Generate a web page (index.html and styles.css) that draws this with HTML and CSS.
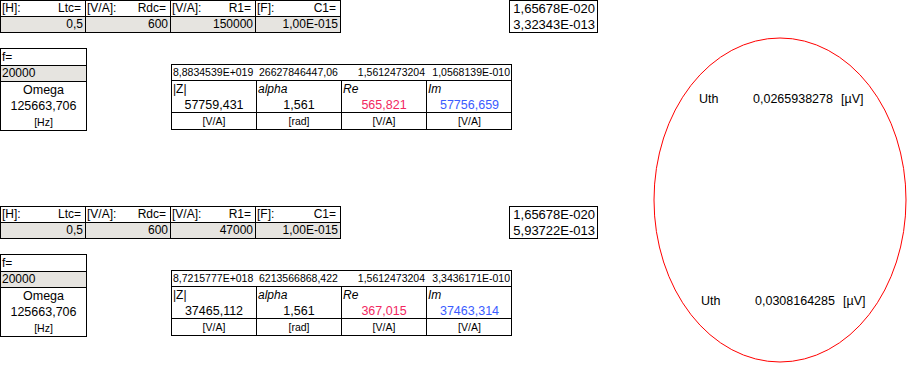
FILE: index.html
```html
<!DOCTYPE html>
<html lang="en">
<head>
    <meta charset="UTF-8">
    <title>Thevenin noise - Ltc / Rdc</title>
    <link rel="stylesheet" href="styles.css">
</head>
<body>
    <div class="page">
        <div class="sheet">
            <!-- Case 1: R1 = 150000 -->
            <div class="block">
                <div class="block-top">
                    <div class="params">
                        <div class="cell label"><span>[H]:</span><span>Ltc=</span></div>
                        <div class="cell label"><span>[V/A]:</span><span>Rdc=</span></div>
                        <div class="cell label"><span>[V/A]:</span><span>R1=</span></div>
                        <div class="cell label"><span>[F]:</span><span>C1=</span></div>
                        <div class="cell value">0,5</div>
                        <div class="cell value">600</div>
                        <div class="cell value">150000</div>
                        <div class="cell value">1,00E-015</div>
                    </div>
                    <div class="consts">
                        <div>1,65678E-020</div>
                        <div>3,32343E-013</div>
                    </div>
                </div>
                <div class="block-body">
                    <div class="freq">
                        <div class="freq-head">f=</div>
                        <div class="freq-input">20000</div>
                        <div class="freq-omega">
                            <div>Omega</div>
                            <div>125663,706</div>
                            <div class="unit">[Hz]</div>
                        </div>
                    </div>
                    <div class="result">
                        <div class="raw">
                            <span>8,8834539E+019</span>
                            <span>26627846447,06</span>
                            <span>1,5612473204</span>
                            <span>1,0568139E-010</span>
                        </div>
                        <div class="grid">
                            <div class="r-col">
                                <div class="r-name">|Z|</div>
                                <div class="r-val">57759,431</div>
                                <div class="r-unit">[V/A]</div>
                            </div>
                            <div class="r-col">
                                <div class="r-name italic">alpha</div>
                                <div class="r-val">1,561</div>
                                <div class="r-unit">[rad]</div>
                            </div>
                            <div class="r-col">
                                <div class="r-name italic">Re</div>
                                <div class="r-val re">565,821</div>
                                <div class="r-unit">[V/A]</div>
                            </div>
                            <div class="r-col">
                                <div class="r-name italic">Im</div>
                                <div class="r-val im">57756,659</div>
                                <div class="r-unit">[V/A]</div>
                            </div>
                        </div>
                    </div>
                </div>
            </div>

            <!-- Case 2: R1 = 47000 -->
            <div class="block second">
                <div class="block-top">
                    <div class="params">
                        <div class="cell label"><span>[H]:</span><span>Ltc=</span></div>
                        <div class="cell label"><span>[V/A]:</span><span>Rdc=</span></div>
                        <div class="cell label"><span>[V/A]:</span><span>R1=</span></div>
                        <div class="cell label"><span>[F]:</span><span>C1=</span></div>
                        <div class="cell value">0,5</div>
                        <div class="cell value">600</div>
                        <div class="cell value">47000</div>
                        <div class="cell value">1,00E-015</div>
                    </div>
                    <div class="consts">
                        <div>1,65678E-020</div>
                        <div>5,93722E-013</div>
                    </div>
                </div>
                <div class="block-body">
                    <div class="freq">
                        <div class="freq-head">f=</div>
                        <div class="freq-input">20000</div>
                        <div class="freq-omega">
                            <div>Omega</div>
                            <div>125663,706</div>
                            <div class="unit">[Hz]</div>
                        </div>
                    </div>
                    <div class="result">
                        <div class="raw">
                            <span>8,7215777E+018</span>
                            <span>6213566868,422</span>
                            <span>1,5612473204</span>
                            <span>3,3436171E-010</span>
                        </div>
                        <div class="grid">
                            <div class="r-col">
                                <div class="r-name">|Z|</div>
                                <div class="r-val">37465,112</div>
                                <div class="r-unit">[V/A]</div>
                            </div>
                            <div class="r-col">
                                <div class="r-name italic">alpha</div>
                                <div class="r-val">1,561</div>
                                <div class="r-unit">[rad]</div>
                            </div>
                            <div class="r-col">
                                <div class="r-name italic">Re</div>
                                <div class="r-val re">367,015</div>
                                <div class="r-unit">[V/A]</div>
                            </div>
                            <div class="r-col">
                                <div class="r-name italic">Im</div>
                                <div class="r-val im">37463,314</div>
                                <div class="r-unit">[V/A]</div>
                            </div>
                        </div>
                    </div>
                </div>
            </div>
        </div>

        <!-- Thevenin voltage for both cases, circled -->
        <div class="callout">
            <svg class="ring" width="254" height="326" viewBox="0 0 254 326">
                <ellipse cx="127" cy="163" rx="126" ry="162" fill="none" stroke="#ff0000" stroke-width="1"/>
            </svg>
            <div class="uth">
                <span class="uth-name">Uth</span>
                <span class="uth-val">0,0265938278</span>
                <span>[µV]</span>
            </div>
            <div class="uth lower">
                <span class="uth-name">Uth</span>
                <span class="uth-val">0,0308164285</span>
                <span>[µV]</span>
            </div>
        </div>
    </div>
</body>
</html>
```

FILE: styles.css
```css
* {
    margin: 0;
    padding: 0;
    box-sizing: border-box;
}

body {
    font-family: 'Liberation Sans', Arial, sans-serif;
    font-size: 12px;
    color: #000;
    background: #fff;
}

.page {
    display: flex;
    width: 910px;
    height: 390px;
    overflow: hidden;
}

.sheet {
    width: 610px;
}

.block.second {
    margin-top: 75px;
}

.block-top {
    display: flex;
    align-items: flex-start;
}

/* parameter table: 4 columns, label row + value row */
.params {
    display: grid;
    grid-template-columns: repeat(4, 85px);
    grid-template-rows: 16px 16px;
    border-top: 1px solid #000;
    border-left: 1px solid #000;
}

.cell {
    border-right: 1px solid #000;
    border-bottom: 1px solid #000;
    line-height: 15px;
    white-space: nowrap;
}

.cell.label {
    display: flex;
    justify-content: space-between;
    padding: 0 4px 0 1px;
}

.cell.value {
    background: #e6e4e0;
    text-align: right;
    padding-right: 2px;
}

.consts {
    margin-left: 168px;
    width: 89px;
    height: 33px;
    border: 1px solid #000;
    text-align: right;
    padding-right: 2px;
    font-size: 13px;
    line-height: 15.5px;
    white-space: nowrap;
}

.block-body {
    display: flex;
    align-items: flex-start;
    margin-top: 15px;
}

/* frequency input box */
.freq {
    width: 87px;
    border: 1px solid #000;
}

.freq-head {
    height: 17px;
    line-height: 16px;
    padding-left: 1px;
    border-bottom: 1px solid #000;
}

.freq-input {
    height: 16px;
    line-height: 15px;
    padding-left: 1px;
    background: #e6e4e0;
    border-bottom: 1px solid #000;
}

.freq-omega {
    height: 48px;
    text-align: center;
    line-height: 16px;
    font-size: 12.5px;
}

.unit {
    font-size: 10.5px;
}

/* |Z|, alpha, Re, Im result table */
.result {
    margin-left: 84px;
    margin-top: 16px;
    width: 341px;
    border: 1px solid #000;
}

.raw {
    display: grid;
    grid-template-columns: repeat(4, 85px);
    height: 16px;
    line-height: 15px;
    font-size: 10.5px;
    border-bottom: 1px solid #000;
    white-space: nowrap;
}

.raw span {
    text-align: right;
    padding-right: 2px;
}

.raw span:first-child {
    text-align: left;
    padding-left: 1px;
}

.raw span:nth-child(2) {
    text-align: left;
    padding-left: 2px;
}

.grid {
    display: grid;
    grid-template-columns: repeat(4, 85px);
}

.r-col {
    border-right: 1px solid #000;
}

.r-col:last-child {
    border-right: none;
}

.r-name {
    height: 16px;
    line-height: 16px;
    padding-left: 1px;
}

.italic {
    font-style: italic;
}

.r-val {
    height: 16px;
    line-height: 16px;
    text-align: center;
    font-size: 12.5px;
    border-bottom: 1px solid #000;
}

.r-val.re {
    color: #f2285f;
}

.r-val.im {
    color: #3a5cff;
}

.r-unit {
    height: 16px;
    line-height: 16px;
    text-align: center;
    font-size: 10.5px;
}

/* circled Uth values */
.callout {
    position: relative;
    width: 254px;
    height: 326px;
    margin-top: 37px;
    margin-left: 43px;
}

.ring {
    position: absolute;
    left: 0;
    top: 0;
}

.uth {
    display: flex;
    padding-left: 46px;
    margin-top: 54px;
    line-height: 16px;
    font-size: 12.5px;
    white-space: nowrap;
}

.uth.lower {
    padding-left: 48px;
    margin-top: 186px;
}

.uth-name {
    width: 54px;
}

.uth-val {
    width: 88px;
}
```
